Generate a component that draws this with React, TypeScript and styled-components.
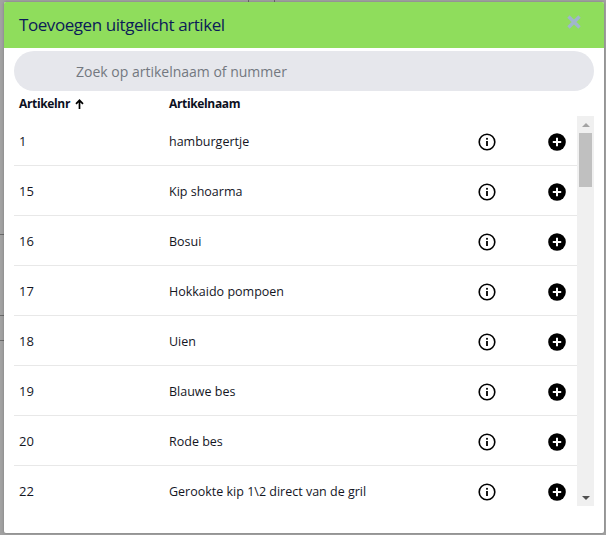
import React from 'react';
import styled, { createGlobalStyle } from 'styled-components';

type Article = {
  nr: number;
  name: string;
};

const articles: Article[] = [
  { nr: 1, name: 'hamburgertje' },
  { nr: 15, name: 'Kip shoarma' },
  { nr: 16, name: 'Bosui' },
  { nr: 17, name: 'Hokkaido pompoen' },
  { nr: 18, name: 'Uien' },
  { nr: 19, name: 'Blauwe bes' },
  { nr: 20, name: 'Rode bes' },
  { nr: 22, name: 'Gerookte kip 1\\2 direct van de gril' },
];

const tick = 'linear-gradient(#6a6a6a, #6a6a6a)';

// the page behind the dialog only peeks through at the edges
const GlobalStyle = createGlobalStyle`
  html, body {
    margin: 0;
    height: 535px;
    overflow: hidden;
    font-family: "Open Sans", "Liberation Sans", sans-serif;
  }
  body {
    background-color: #a2a2a2;
    background-image: ${tick}, ${tick}, ${tick}, ${tick}, ${tick};
    background-repeat: no-repeat;
    background-size: 1px 2px, 1px 2px, 4px 1px, 4px 1px, 4px 1px;
    background-position: 248px 0, 274px 0, 0 234px, 0 315px, 0 340px;
  }
`;

const Modal = styled.div`
  width: 600px;
  height: 531px;
  margin: 2px 2px 2px 4px;
  background: #ffffff;
  display: flex;
  flex-direction: column;
  box-sizing: border-box;
  border-radius: 2px;
  box-shadow: 0 0 3px rgba(0, 0, 0, 0.25);
`;

const Header = styled.div`
  height: 46px;
  background: #8fdd5c;
  display: flex;
  justify-content: space-between;
  padding: 0 23px 0 15px;
  flex-shrink: 0;
  border-radius: 2px 2px 0 0;
`;

const Title = styled.div`
  font-size: 17px;
  line-height: 46px;
  color: #0b1b58;
  letter-spacing: -0.43px;
`;

const CloseButton = styled.button`
  width: 14px;
  height: 14px;
  margin-top: 13px;
  padding: 0;
  border: none;
  background: none;
  display: flex;
`;

const SearchBar = styled.input`
  height: 40px;
  margin: 3px 10px 0;
  padding: 0 0 0 62px;
  border: none;
  outline: none;
  flex-shrink: 0;
  border-radius: 20px;
  background: #e6e7ec;
  font-family: inherit;
  font-size: 14px;
  &::placeholder {
    color: #737880;
    opacity: 1;
  }
`;

const ColumnHeader = styled.div`
  height: 25px;
  display: flex;
  align-items: center;
  padding: 0 15px;
  font-size: 12px;
  font-weight: 700;
  color: #0b1021;
  letter-spacing: -0.35px;
  flex-shrink: 0;
`;

const NrHead = styled.div`
  width: 150px;
  display: flex;
  align-items: center;
  gap: 5px;
`;

const Body = styled.div`
  height: 390px;
  margin: 0 10px;
  display: flex;
`;

const List = styled.div`
  flex: 1;
  overflow: hidden;
`;

const Row = styled.div`
  height: 50px;
  box-sizing: border-box;
  display: flex;
  align-items: center;
  padding: 2px 11px 0 5px;
  border-bottom: 1px solid #e8e8e8;
  font-size: 12.5px;
  color: #14161f;
`;

const NrCell = styled.div`
  width: 150px;
  margin-bottom: 2px;
  font-size: 13px;
`;

const NameCell = styled.div`
  flex: 1;
`;

const IconCell = styled.div`
  width: 70px;
  display: flex;
  justify-content: flex-end;
`;

const Scrollbar = styled.div`
  width: 17px;
  background: #f0f0f0;
  display: flex;
  flex-direction: column;
  align-items: center;
`;

const ScrollArrow = styled.div<{ $up?: boolean }>`
  height: 17px;
  width: 100%;
  display: flex;
  align-items: center;
  justify-content: center;
  &::before {
    content: '';
    border-left: 4px solid transparent;
    border-right: 4px solid transparent;
    ${(p) => (p.$up ? 'border-bottom: 4px solid #a3a3a3;' : 'border-top: 4px solid #505050;')}
  }
`;

const ScrollTrack = styled.div`
  flex: 1;
  width: 100%;
`;

const ScrollThumb = styled.div`
  width: 13px;
  height: 54px;
  margin: 0 auto;
  background: #c0c0c0;
`;

const InfoIcon = () => (
  <svg width="18" height="18" viewBox="0 0 18 18">
    <circle cx="9" cy="9" r="7.8" fill="none" stroke="#000" strokeWidth="1.6" />
    <rect x="8.1" y="8" width="1.8" height="5" fill="#000" />
    <rect x="8.1" y="4.9" width="1.8" height="1.8" fill="#000" />
  </svg>
);

const PlusIcon = () => (
  <svg width="18" height="18" viewBox="0 0 18 18">
    <circle cx="9" cy="9" r="8.8" fill="#000" />
    <path d="M9 4.8v8.4M4.8 9h8.4" stroke="#fff" strokeWidth="2" />
  </svg>
);

const App: React.FC = () => {
  return (
    <>
      <GlobalStyle />
      <Modal>
        <Header>
          <Title>Toevoegen uitgelicht artikel</Title>
          <CloseButton>
            <svg width="14" height="14" viewBox="0 0 14 14">
              <path d="M1.5 1.5l11 11M12.5 1.5l-11 11" stroke="#a0b6cc" strokeWidth="3.4" />
            </svg>
          </CloseButton>
        </Header>
        <SearchBar placeholder="Zoek op artikelnaam of nummer" />
        <ColumnHeader>
          <NrHead>
            Artikelnr
            <svg width="9" height="10" viewBox="0 0 9 10">
              <path d="M4.5 10V1.5M1 4.8l3.5-3.5L8 4.8" fill="none" stroke="#000" strokeWidth="1.7" />
            </svg>
          </NrHead>
          <div>Artikelnaam</div>
        </ColumnHeader>
        <Body>
          <List>
            {articles.map((article) => (
              <Row key={article.nr}>
                <NrCell>{article.nr}</NrCell>
                <NameCell>{article.name}</NameCell>
                <IconCell>
                  <InfoIcon />
                </IconCell>
                <IconCell>
                  <PlusIcon />
                </IconCell>
              </Row>
            ))}
          </List>
          <Scrollbar>
            <ScrollArrow $up />
            <ScrollTrack>
              <ScrollThumb />
            </ScrollTrack>
            <ScrollArrow />
          </Scrollbar>
        </Body>
      </Modal>
    </>
  );
};

export default App;
